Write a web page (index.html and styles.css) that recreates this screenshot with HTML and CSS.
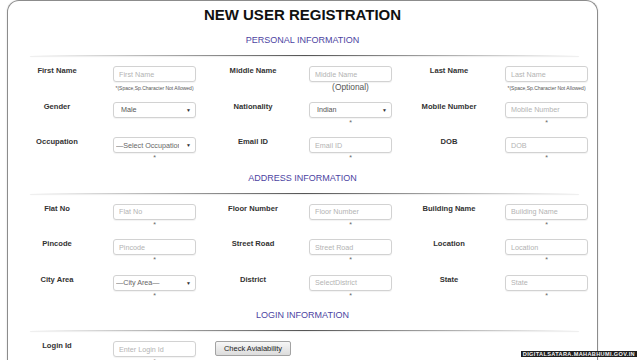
FILE: index.html
```html
<!DOCTYPE html>
<html lang="en">
<head>
<meta charset="utf-8">
<title>New User Registration</title>
<link rel="stylesheet" href="styles.css">
</head>
<body>
<div class="page">
  <div class="card">
    <h1 class="title">NEW USER REGISTRATION</h1>

    <section class="section">
      <h2 class="section-title">PERSONAL INFORMATION</h2>
      <hr class="divider">
      <div class="grid">
        <label class="label">First Name</label>
        <div class="field">
          <input class="input" placeholder="First Name">
          <span class="hint">*(Space,Sp.Character Not Allowed)</span>
        </div>
        <label class="label">Middle Name</label>
        <div class="field">
          <input class="input" placeholder="Middle Name">
          <span class="optional">(Optional)</span>
        </div>
        <label class="label">Last Name</label>
        <div class="field">
          <input class="input" placeholder="Last Name">
          <span class="hint">*(Space,Sp.Character Not Allowed)</span>
        </div>

        <label class="label">Gender</label>
        <div class="field">
          <div class="select-wrap"><select class="select"><option>Male</option></select></div>
        </div>
        <label class="label">Nationality</label>
        <div class="field">
          <div class="select-wrap"><select class="select"><option>Indian</option></select></div>
          <span class="req">*</span>
        </div>
        <label class="label">Mobile Number</label>
        <div class="field">
          <input class="input" placeholder="Mobile Number">
          <span class="req">*</span>
        </div>

        <label class="label">Occupation</label>
        <div class="field">
          <div class="select-wrap"><select class="select select--empty"><option>&mdash;Select Occupation&mdash;</option></select></div>
          <span class="req">*</span>
        </div>
        <label class="label">Email ID</label>
        <div class="field">
          <input class="input" placeholder="Email ID">
          <span class="req">*</span>
        </div>
        <label class="label">DOB</label>
        <div class="field">
          <input class="input" placeholder="DOB">
          <span class="req">*</span>
        </div>
      </div>
    </section>

    <section class="section">
      <h2 class="section-title">ADDRESS INFORMATION</h2>
      <hr class="divider">
      <div class="grid">
        <label class="label">Flat No</label>
        <div class="field">
          <input class="input" placeholder="Flat No">
          <span class="req">*</span>
        </div>
        <label class="label">Floor Number</label>
        <div class="field">
          <input class="input" placeholder="Floor Number">
          <span class="req">*</span>
        </div>
        <label class="label">Building Name</label>
        <div class="field">
          <input class="input" placeholder="Building Name">
          <span class="req">*</span>
        </div>

        <label class="label">Pincode</label>
        <div class="field">
          <input class="input" placeholder="Pincode">
          <span class="req">*</span>
        </div>
        <label class="label">Street Road</label>
        <div class="field">
          <input class="input" placeholder="Street Road">
          <span class="req">*</span>
        </div>
        <label class="label">Location</label>
        <div class="field">
          <input class="input" placeholder="Location">
          <span class="req">*</span>
        </div>

        <label class="label">City Area</label>
        <div class="field">
          <div class="select-wrap"><select class="select select--empty"><option>&mdash;City Area&mdash;</option></select></div>
          <span class="req">*</span>
        </div>
        <label class="label">District</label>
        <div class="field">
          <input class="input" placeholder="SelectDistrict">
          <span class="req">*</span>
        </div>
        <label class="label">State</label>
        <div class="field">
          <input class="input" placeholder="State">
          <span class="req">*</span>
        </div>
      </div>
    </section>

    <section class="section">
      <h2 class="section-title">LOGIN INFORMATION</h2>
      <hr class="divider">
      <div class="grid">
        <label class="label">Login Id</label>
        <div class="field">
          <input class="input" placeholder="Enter Login Id">
          <span class="req">*</span>
        </div>
        <button class="btn" type="button">Check Avialability</button>
      </div>
    </section>
  </div>
  <div class="watermark">DIGITALSATARA.MAHABHUMI.GOV.IN</div>
</div>
</body>
</html>
```

FILE: styles.css
```css
html, body {
  margin: 0;
  padding: 0;
  background: #ffffff;
  overflow: hidden;
}

body {
  font-family: "Liberation Sans", Arial, sans-serif;
  color: #333;
}

.page {
  position: relative;
  width: 640px;
  height: 360px;
  overflow: hidden;
}

.card {
  margin-left: 7px;
  width: 589px;
  min-height: 420px;
  border: 1px solid #8c8c8c;
  border-bottom: none;
  border-radius: 12px 12px 0 0;
  padding-top: 5px;
  box-shadow: 0 0 2px rgba(0, 0, 0, 0.15);
}

.title {
  margin: 0;
  font-size: 15px;
  line-height: 18px;
  font-weight: bold;
  text-align: center;
  color: #111;
}

.section-title {
  margin: 11px 0 0;
  font-size: 9px;
  line-height: 10px;
  font-weight: normal;
  text-align: center;
  color: #4c44a2;
}

.section + .section .section-title {
  margin-top: 0;
}

.divider {
  margin: 10px 18px 10px 22px;
  height: 1px;
  border: none;
  background: linear-gradient(to right, rgba(80, 80, 80, 0), #555 50%, rgba(80, 80, 80, 0));
  box-shadow: 0 1px 1px rgba(0, 0, 0, 0.08);
}

.grid {
  display: grid;
  grid-template-columns: 98px 84px 98px 84px 98px 84px;
  column-gap: 7px;
  grid-auto-rows: 35.5px;
  align-items: start;
}

.label {
  font-size: 7.6px;
  line-height: 9px;
  font-weight: bold;
  text-align: center;
  color: #333;
}

.field {
  display: flex;
  flex-direction: column;
  align-items: center;
  width: 83px;
}

.input,
.select {
  display: block;
  width: 83px;
  height: 16px;
  box-sizing: border-box;
  margin: 0;
  padding: 0 5px;
  border: 1px solid #d2d2d2;
  border-radius: 3px;
  background: #fff;
  font-family: "Liberation Sans", Arial, sans-serif;
  font-size: 7.2px;
  color: #555;
  box-shadow: 0 1px 1px rgba(0, 0, 0, 0.05);
  outline: none;
}

.input::placeholder {
  color: #b3b3b3;
}

.select-wrap {
  position: relative;
  width: 83px;
  height: 16px;
}

.select {
  -webkit-appearance: none;
  appearance: none;
  padding-left: 7px;
  padding-right: 16px;
}

.select--empty {
  padding-left: 2px;
  color: #666;
}

.select-wrap::after {
  content: "\25BC";
  position: absolute;
  right: 5px;
  top: 5px;
  font-size: 5px;
  line-height: 6px;
  color: #333;
  pointer-events: none;
}

.hint {
  margin-top: 3px;
  font-size: 5px;
  line-height: 6px;
  color: #555;
  white-space: nowrap;
}

.optional {
  margin-top: 1px;
  font-size: 8.4px;
  line-height: 9px;
  color: #555;
}

.req {
  margin-top: 1px;
  font-size: 7px;
  line-height: 7px;
  color: #666;
}

.btn {
  justify-self: start;
  margin-left: 11px;
  width: 76px;
  height: 15px;
  padding: 0;
  border: 1px solid #a3a3a3;
  border-radius: 2px;
  background: linear-gradient(#f7f7f7, #dcdcdc);
  font-family: "Liberation Sans", Arial, sans-serif;
  font-size: 7.5px;
  color: #222;
}

.watermark {
  position: absolute;
  right: 3px;
  bottom: 3px;
  padding: 0 2px;
  background: #1e1e1e;
  color: #f2f2f2;
  font-size: 5.6px;
  line-height: 6px;
  font-weight: bold;
  letter-spacing: 0.35px;
  white-space: nowrap;
}
```
